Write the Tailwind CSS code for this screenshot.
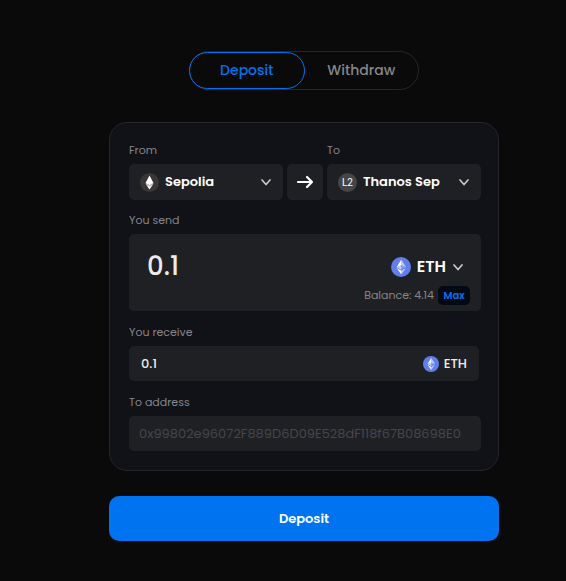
<!DOCTYPE html>
<html lang="en">
<head>
<meta charset="utf-8">
<meta name="viewport" content="width=device-width, initial-scale=1">
<title>Deposit</title>
<script src="https://cdn.jsdelivr.net/npm/@tailwindcss/browser@4"></script>
</head>
<body class="min-h-screen bg-[#0a0a0a] font-[Poppins,Inter,sans-serif] text-white">
<svg class="hidden" aria-hidden="true">
  <symbol id="chevron" viewBox="0 0 12 12"><path d="M2 4l4 4.5L10 4" fill="none" stroke="currentColor" stroke-width="1.7" stroke-linecap="round" stroke-linejoin="round"/></symbol>
  <symbol id="eth" viewBox="0 0 32 32">
    <circle cx="16" cy="16" r="16" fill="#627eea"/>
    <g fill="#fff">
      <path fill-opacity=".602" d="M16.5 4v8.87l7.5 3.35z"/><path d="M16.5 4L9 16.22l7.5-3.35z"/>
      <path fill-opacity=".602" d="M16.5 21.97v6.03L24 17.62z"/><path d="M16.5 28v-6.03L9 17.62z"/>
      <path fill-opacity=".2" d="M16.5 20.57l7.5-4.35-7.5-3.35z"/><path fill-opacity=".602" d="M9 16.22l7.5 4.35v-7.7z"/>
    </g>
  </symbol>
</svg>
<main class="pt-[51px] pb-10 pl-[42px]">
  <div class="mx-auto w-full max-w-[390px]">
    <nav class="mx-auto flex w-[230px] rounded-full border border-[#25262b] text-[14px] font-medium">
      <button type="button" class="-ml-px h-[37px] flex-1 rounded-full border border-[#0073f0] text-[#0073f0]">Deposit</button>
      <button type="button" class="h-[37px] flex-1 rounded-full text-[#85868b]">Withdraw</button>
    </nav>

    <form class="mt-8">
      <section class="rounded-[18px] border border-[#25262d] bg-[#111217] pt-[17px] pr-[17px] pb-[19px] pl-[19px] text-[11px]">
        <div class="grid grid-cols-[1fr_36px_1fr] gap-x-1">
          <label for="from" class="mb-1 leading-5 text-[#85868b]">From</label>
          <span></span>
          <label for="to" class="mb-1 leading-5 text-[#85868b]">To</label>
          <div class="flex h-9 items-center rounded-[5px] bg-[#1f2024] px-[11px]">
            <svg class="size-[19px] shrink-0" viewBox="0 0 20 20" aria-hidden="true"><circle cx="10" cy="10" r="10" fill="#383735"/><path fill="#fff" d="M10 2.6l4.2 8L10 13 5.8 10.6zM6.2 11.8l3.8 2.3 3.8-2.3L10 17.4z"/><path fill="#fff" fill-opacity=".7" d="M5.8 10.6L10 13l4.2-2.4-.4 1.2-3.8 2.3-3.8-2.3z"/></svg>
            <select id="from" class="min-w-0 flex-1 appearance-none bg-transparent pl-[6px] text-[13px] font-semibold"><option>Sepolia</option></select>
            <svg class="pointer-events-none size-3 shrink-0 text-[#c9cad0]" aria-hidden="true"><use href="#chevron"/></svg>
          </div>
          <button type="button" aria-label="Swap networks" class="flex h-9 items-center justify-center rounded-[5px] bg-[#1f2024]">
            <svg class="h-4 w-[18px]" viewBox="0 0 18 16" fill="none" stroke="currentColor" stroke-width="2.2" stroke-linecap="round" stroke-linejoin="round" aria-hidden="true"><path d="M2 8h14M11 3l5 5-5 5"/></svg>
          </button>
          <div class="flex h-9 items-center rounded-[5px] bg-[#1f2024] px-[11px]">
            <span class="flex size-[19px] shrink-0 items-center justify-center rounded-full bg-[#454545] font-[Roboto,sans-serif] text-[10px]">L2</span>
            <select id="to" class="min-w-0 flex-1 appearance-none bg-transparent pl-[6px] text-[13px] font-semibold"><option>Thanos Sep</option></select>
            <svg class="pointer-events-none size-3 shrink-0 text-[#c9cad0]" aria-hidden="true"><use href="#chevron"/></svg>
          </div>
        </div>

        <label for="send" class="mt-[10px] mb-1 block leading-5 text-[#85868b]">You send</label>
        <div class="flex h-[77px] justify-between rounded-[5px] bg-[#1f2024] pr-[11px] pl-[18px]">
          <input id="send" value="0.1" inputmode="decimal" class="mt-3 h-10 w-0 min-w-0 flex-1 bg-transparent text-[26px] font-medium text-[#ececee] outline-none">
          <div class="flex flex-col items-end pt-[21px]">
            <button type="button" aria-haspopup="listbox" class="mr-[6px] flex h-6 items-center gap-[6px] text-[16px] font-semibold">
              <svg class="size-5" aria-hidden="true"><use href="#eth"/></svg>ETH
              <svg class="size-3 text-[#c9cad0]" aria-hidden="true"><use href="#chevron"/></svg>
            </button>
            <div class="mt-[7px] flex h-[19px] items-center gap-1 text-[#85868b]">
              <span>Balance: 4.14</span>
              <button type="button" class="h-[19px] w-8 rounded-[5px] bg-[#020814] text-[10px] font-semibold text-[#0073f0]">Max</button>
            </div>
          </div>
        </div>

        <label for="receive" class="mt-[11px] mb-1 block leading-5 text-[#85868b]">You receive</label>
        <div class="mr-[2px] flex h-[35px] items-center justify-between rounded-[5px] bg-[#1f2024] px-3">
          <input id="receive" value="0.1" readonly class="w-0 min-w-0 flex-1 bg-transparent text-[13px] font-medium text-[#ececee] outline-none">
          <span class="flex items-center gap-[5px] text-[13px] font-medium text-[#ececee]"><svg class="size-4" aria-hidden="true"><use href="#eth"/></svg>ETH</span>
        </div>

        <label for="address" class="mt-[11px] mb-1 block leading-5 text-[#85868b]">To address</label>
        <input id="address" placeholder="0x99802e96072F889D6D09E528dF118f67B08698E0" class="block h-[35px] w-full rounded-[5px] bg-[#1f2024] px-[10px] text-[13px] outline-none placeholder:text-[#45464b]">
      </section>
      <button type="button" class="mt-[25px] h-[45px] w-full rounded-[10px] bg-[#0073f0] text-[13px] font-semibold">Deposit</button>
    </form>
  </div>
</main>
</body>
</html>
